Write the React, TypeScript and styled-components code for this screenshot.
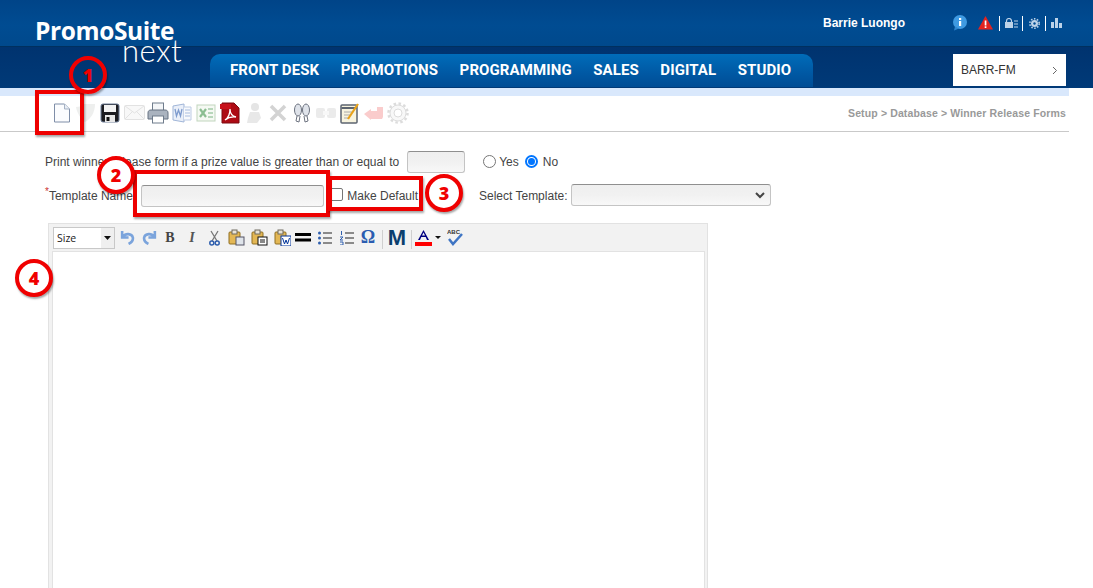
import React from "react";
import styled, { createGlobalStyle } from "styled-components";

const Global = createGlobalStyle`
  html, body { margin: 0; padding: 0; background: #fff; height: 588px; overflow: hidden; }
  body { font-family: "Liberation Sans", Arial, sans-serif; font-size: 12px; color: #444; }
`;

const Page = styled.div`
  position: relative;
  width: 1093px;
  height: 588px;
  overflow: hidden;
`;

const Header = styled.header`
  position: relative;
  height: 88px;
  display: flex;
  flex-direction: column;
`;

const TopBar = styled.div`
  height: 47px;
  box-sizing: border-box;
  background: linear-gradient(180deg, #004488 0%, #004c92 55%, #00498c 100%);
  border-bottom: 1px solid #00305f;
  display: flex;
  justify-content: flex-end;
  align-items: flex-start;
  padding: 16px 27px 0 0;
`;

const NavBar = styled.div`
  flex: 1;
  background: linear-gradient(180deg, #00336f 0%, #003a78 100%);
  display: flex;
  align-items: flex-end;
  justify-content: space-between;
  padding: 0 27px 0 210px;
`;

const Brand = styled.div`
  position: absolute;
  left: 35px;
  top: 16px;
  width: 150px;
  color: #fff;
`;

const BrandName = styled.div`
  font-family: "Open Sans", sans-serif;
  font-weight: 700;
  font-size: 24.5px;
  line-height: 30px;
  letter-spacing: -0.4px;
`;

const BrandNext = styled.div`
  font-family: "Lato", sans-serif;
  font-weight: 300;
  font-size: 31px;
  line-height: 25px;
  letter-spacing: 0.5px;
  margin-left: 87px;
  margin-top: -8px;
`;

const UserName = styled.span`
  font-weight: 700;
  font-size: 12px;
  line-height: 14px;
  color: #fff;
  margin-right: 47px;
`;

const TopIcons = styled.div`
  display: flex;
  align-items: center;
  height: 14px;
`;

const TopIcon = styled.span<{ $w: number; $ml?: number }>`
  display: flex;
  align-items: center;
  justify-content: center;
  width: ${(p) => p.$w}px;
  margin-left: ${(p) => p.$ml ?? 0}px;
  height: 14px;
`;

const TopSep = styled.span<{ $ml?: number }>`
  width: 1px;
  height: 15px;
  margin-left: ${(p) => p.$ml ?? 0}px;
  background: #fff;
`;

const NavTabs = styled.nav`
  width: 603px;
  height: 34px;
  box-sizing: border-box;
  border-radius: 10px 10px 0 0;
  background: linear-gradient(180deg, #006cb9 0%, #0058a3 60%, #004d95 100%);
  border-bottom: 1px solid #003a78;
  display: flex;
  align-items: center;
  gap: 21.5px;
  padding: 0 0 1px 20px;
`;

const NavItem = styled.span`
  font-family: "Roboto", sans-serif;
  font-weight: 700;
  font-size: 15px;
  letter-spacing: 0.1px;
  color: #fff;
  white-space: nowrap;
`;

const Station = styled.div`
  width: 113px;
  height: 32px;
  margin-bottom: 2px;
  background: #fff;
  box-sizing: border-box;
  display: flex;
  align-items: center;
  justify-content: space-between;
  padding: 0 8px;
  font-size: 12px;
  color: #333;
`;

const Strip = styled.div`
  width: 1069px;
  height: 8px;
  background: #d9e8fc;
`;

const ToolRow = styled.div`
  width: 1069px;
  height: 36px;
  box-sizing: border-box;
  border-bottom: 1px solid #c9c9c9;
  display: flex;
  align-items: center;
  justify-content: space-between;
  padding: 0 3px 2px 50px;
`;

const ToolIcons = styled.div`
  display: flex;
  align-items: center;
`;

const ToolIcon = styled.span`
  width: 24px;
  height: 24px;
  display: flex;
  align-items: center;
  justify-content: center;
`;

const Crumb = styled.div`
  font-size: 10.5px;
  font-weight: 700;
  color: #999;
  letter-spacing: 0.13px;
`;

const Form = styled.main`
  padding: 18px 0 0 45px;
`;

const Row = styled.div`
  display: flex;
  align-items: center;
  height: 24px;
`;

const SecondRow = styled(Row)`
  margin-top: 10px;
`;

const Label = styled.label`
  font-size: 12px;
  color: #444;
  white-space: nowrap;
`;

const Required = styled.sup`
  color: #c33;
  font-size: 10px;
  line-height: 0;
`;

const TextBox = styled.div<{ $w: number; $ml: number }>`
  width: ${(p) => p.$w}px;
  height: 22px;
  margin-left: ${(p) => p.$ml}px;
  box-sizing: border-box;
  border: 1px solid #c4c4c4;
  border-top-color: #8f8f8f;
  border-radius: 3px;
  background: linear-gradient(180deg, #efefef 0%, #f1f1f1 50%, #f8f8f8 100%);
  flex: none;
`;

const RadioDot = styled.span<{ $on?: boolean; $ml: number }>`
  width: 13px;
  height: 13px;
  margin-left: ${(p) => p.$ml}px;
  margin-top: -2px;
  box-sizing: border-box;
  border-radius: 50%;
  flex: none;
  background: #fff;
  border: ${(p) => (p.$on ? "2px solid #0075ff" : "1px solid #767676")};
  display: flex;
  align-items: center;
  justify-content: center;
  &::after {
    content: "";
    width: 7px;
    height: 7px;
    border-radius: 50%;
    background: ${(p) => (p.$on ? "#0075ff" : "transparent")};
  }
`;

const Check = styled.span`
  width: 13px;
  height: 13px;
  margin-left: 6px;
  margin-top: -3px;
  border: 1px solid #767676;
  border-radius: 2px;
  box-sizing: border-box;
  background: #fff;
  flex: none;
`;

const InlineText = styled.span<{ $ml: number }>`
  margin-left: ${(p) => p.$ml}px;
  white-space: nowrap;
  color: #444;
`;

const SelectBox = styled.div`
  width: 200px;
  height: 22px;
  margin-left: 4px;
  box-sizing: border-box;
  border: 1px solid #c4c4c4;
  border-top-color: #8f8f8f;
  border-radius: 3px;
  background: linear-gradient(180deg, #efefef 0%, #f1f1f1 50%, #f8f8f8 100%);
  display: flex;
  align-items: center;
  justify-content: flex-end;
  padding-right: 5px;
  margin-top: -2px;
`;

const Editor = styled.section`
  width: 660px;
  height: 420px;
  margin: 15px 0 0 3px;
  box-sizing: border-box;
  border: 1px solid #e2e2e2;
  background: #f2f2f2;
  padding: 0 2px 0 3px;
`;

const EditorBar = styled.div`
  height: 27px;
  display: flex;
  align-items: center;
  padding-left: 1px;
`;

const SizePick = styled.div`
  width: 62px;
  height: 22px;
  margin-right: 1px;
  box-sizing: border-box;
  border: 1px solid #c8c8c8;
  background: #fff;
  display: flex;
  align-items: center;
  justify-content: space-between;
  font-size: 10.5px;
  font-family: "Open Sans", sans-serif;
  color: #222;
  padding-left: 3px;
  flex: none;
`;

const SizeArrow = styled.span`
  width: 13px;
  height: 20px;
  background: #efefef;
  display: flex;
  align-items: center;
  justify-content: center;
`;

const EdIcon = styled.span<{ $w: number }>`
  width: ${(p) => p.$w}px;
  height: 22px;
  display: flex;
  align-items: center;
  justify-content: center;
  flex: none;
`;

const EdGlyph = styled(EdIcon)`
  font-family: "Liberation Serif", serif;
  font-weight: 700;
  font-size: 14px;
  color: #444;
`;

const EdItalic = styled(EdGlyph)`
  font-style: italic;
  color: #555;
`;

const EdOmega = styled(EdGlyph)`
  font-size: 18px;
  color: #2a5cb0;
`;

const EdBigM = styled(EdIcon)`
  font-family: "Liberation Sans", sans-serif;
  font-weight: 700;
  font-size: 22px;
  color: #0a3f6e;
`;

const EdSep = styled.span<{ $ml?: number }>`
  width: 1px;
  height: 19px;
  margin-left: ${(p) => p.$ml ?? 0}px;
  background: #cfcfcf;
  flex: none;
  align-self: flex-end;
  margin-bottom: 2px;
`;

const EditArea = styled.div`
  height: 400px;
  background: #fff;
  border: 1px solid #e2e2e2;
`;

const Box = styled.div<{ $l: number; $t: number; $w: number; $h: number }>`
  position: absolute;
  left: ${(p) => p.$l}px;
  top: ${(p) => p.$t}px;
  width: ${(p) => p.$w}px;
  height: ${(p) => p.$h}px;
  box-sizing: border-box;
  border: 4px solid #ee0000;
  box-shadow: 1px 2px 2px rgba(0, 0, 0, 0.35);
`;

const Marker = styled.div<{ $l: number; $t: number }>`
  position: absolute;
  left: ${(p) => p.$l}px;
  top: ${(p) => p.$t}px;
  width: 38px;
  height: 38px;
  box-sizing: border-box;
  border: 4px solid #f00000;
  border-radius: 50%;
  background: #fff;
  color: #f00000;
  font-family: "Open Sans", sans-serif;
  font-weight: 800;
  font-size: 18px;
  display: flex;
  align-items: center;
  justify-content: center;
  box-shadow: 1px 2px 2px rgba(0, 0, 0, 0.35);
`;

const RingMarker = styled(Marker)`
  background: transparent;
`;

/* ---------- icon drawings ---------- */
const Doc = () => (
  <svg width="18" height="20" viewBox="0 0 18 20">
    <path d="M1.5 1h10l5 5v13h-15z" fill="#fbfcfe" stroke="#7f8ea8" />
    <path d="M11.5 1v5h5" fill="#e8edf4" stroke="#a5b1c4" />
  </svg>
);
const Shield = () => (
  <svg width="22" height="20" viewBox="0 0 22 20" opacity=".35">
    <path d="M1 4c4 0 6-1 8-3h11c0 8-4 15-10 18C6 16 2 10 1 4z" fill="#cfd3cf" />
  </svg>
);
const Save = () => (
  <svg width="20" height="20" viewBox="0 0 20 20">
    <rect x="1" y="1" width="18" height="18" rx="2" fill="#1c1c20" stroke="#6f7e98" />
    <rect x="4" y="2" width="12" height="7" fill="#f3f3f3" />
    <rect x="5" y="12" width="10" height="7" fill="#e8e8e8" />
    <rect x="6.5" y="14" width="3" height="4" fill="#111" />
  </svg>
);
const Mail = () => (
  <svg width="21" height="15" viewBox="0 0 21 15" opacity=".55">
    <rect x=".5" y=".5" width="20" height="14" rx="1" fill="#f3f3f3" stroke="#ccc" />
    <path d="M1 1l9.5 7L20 1M1 14l7-7M20 14l-7-7" fill="none" stroke="#ccc" />
  </svg>
);
const Printer = () => (
  <svg width="22" height="22" viewBox="0 0 22 22">
    <rect x="5.5" y="1" width="11" height="8" fill="#f4f6f8" stroke="#6f7c8c" />
    <path d="M1 11c0-2 1-3 3-3h14c2 0 3 1 3 3v6H1z" fill="#aab3bf" stroke="#667282" />
    <rect x="5.5" y="14" width="11" height="7" fill="#fff" stroke="#6f7c8c" />
  </svg>
);
const Word = () => (
  <svg width="20" height="20" viewBox="0 0 20 20" opacity=".65">
    <path d="M1 3l11-2v18L1 17z" fill="#dfe8f6" stroke="#6f8fc4" />
    <path d="M12 4h7v13h-7" fill="#f3f6fb" stroke="#9bb2d8" />
    <path d="M3 6l1.5 7L6.5 7l2 6L10 6" fill="none" stroke="#3a66b4" strokeWidth="1.3" />
    <path d="M13 7h5M13 10h5M13 13h5" stroke="#7d9bd0" />
  </svg>
);
const Excel = () => (
  <svg width="20" height="20" viewBox="0 0 20 20" opacity=".55">
    <rect x="1" y="2" width="18" height="16" fill="#eef5ea" stroke="#8fb58a" />
    <path d="M4 6l6 8M10 6l-6 8" stroke="#2f8a3a" strokeWidth="2.2" />
    <path d="M12 6h5M12 10h5M12 14h5" stroke="#5aa060" strokeWidth="1.5" />
  </svg>
);
const Pdf = () => (
  <svg width="20" height="22" viewBox="0 0 20 22">
    <path d="M2 1h12l5 5v15H2z" fill="#ad0b14" stroke="#7c0b10" />
    <rect x="0" y="2" width="11" height="5" fill="#c8101a" />
    <path d="M5 18c3-2 5-6 5-11 0 4 2 7 6 8-4-.5-8 .5-11 3z" fill="none" stroke="#fff" strokeWidth="1.3" />
  </svg>
);
const Person = () => (
  <svg width="18" height="22" viewBox="0 0 18 22" opacity=".3">
    <circle cx="10" cy="5" r="4" fill="#aaa" />
    <path d="M5 10h9l2 6-4 5H2l1-5z" fill="#b5b5b5" />
  </svg>
);
const Cross = () => (
  <svg width="18" height="18" viewBox="0 0 18 18" opacity=".5">
    <path d="M2 2l14 14M16 2L2 16" stroke="#a8a8a8" strokeWidth="3.5" />
  </svg>
);
const Feet = () => (
  <svg width="18" height="20" viewBox="0 0 18 20">
    <ellipse cx="5" cy="7" rx="3.5" ry="6" fill="#dfe3ea" stroke="#6d7380" />
    <ellipse cx="13" cy="7" rx="3.5" ry="6" fill="#dfe3ea" stroke="#6d7380" />
    <path d="M4 13l-1 5 3 1 1-6M14 13l1 5-3 1-1-6" fill="none" stroke="#6d7380" />
  </svg>
);
const Link = () => (
  <svg width="20" height="12" viewBox="0 0 20 12" opacity=".4">
    <rect x="0" y="1" width="9" height="10" rx="2" fill="#cfcfcf" />
    <rect x="11" y="1" width="9" height="10" rx="2" fill="#cfcfcf" />
    <rect x="7" y="4" width="6" height="4" fill="#eee" />
  </svg>
);
const Note = () => (
  <svg width="20" height="22" viewBox="0 0 20 22">
    <rect x="1" y="3" width="16" height="18" rx="1" fill="#f7f3de" stroke="#5c6470" strokeWidth="1.5" />
    <path d="M1.5 6h15" stroke="#5c6470" strokeWidth="2" />
    <path d="M4 10h8M4 13h6M4 16h5" stroke="#aaa" />
    <path d="M8 17L18 2" stroke="#e8a21a" strokeWidth="2.2" />
  </svg>
);
const BackArrow = () => (
  <svg width="20" height="14" viewBox="0 0 20 14" opacity=".3">
    <path d="M0 8l7-5v2h6V1h6v10l-1 2H7v1z" fill="#f05a5a" />
  </svg>
);
const Cog = () => (
  <svg width="22" height="22" viewBox="0 0 22 22" opacity=".4">
    <circle cx="11" cy="11" r="8" fill="#eee" stroke="#aaa" strokeWidth="1" />
    <circle cx="11" cy="11" r="9.5" fill="none" stroke="#aaa" strokeWidth="2.5" strokeDasharray="2.5 2.5" />
    <circle cx="11" cy="11" r="4" fill="#fff" stroke="#aaa" />
  </svg>
);

const toolIcons = [Doc, Shield, Save, Mail, Printer, Word, Excel, Pdf, Person, Cross, Feet, Link, Note, BackArrow, Cog];

const Undo = ({ flip }: { flip?: boolean }) => (
  <svg width="15" height="15" viewBox="0 0 14 14">
    <g transform={flip ? "matrix(-1 0 0 1 14 0)" : undefined}>
      <path d="M2 1v6h6M3 6c2-3 8-3 9 1 .5 3-2 5-4 6" fill="none" stroke="#7ba4dc" strokeWidth="2.4" />
    </g>
  </svg>
);
const Clip = ({ children }: { children?: React.ReactNode }) => (
  <svg width="17" height="17" viewBox="0 0 17 17">
    <rect x="1" y="3" width="11" height="12" rx="1" fill="#e3b754" stroke="#8f6e22" />
    <rect x="4" y="1" width="5" height="4" fill="#e9e4d8" stroke="#6f6a5e" />
    {children}
  </svg>
);

const Top = {
  Info: () => (
    <svg width="17" height="18" viewBox="0 0 16 17">
      <circle cx="8" cy="7.5" r="7" fill="#3f9ae2" />
      <path d="M3 12l-1 4 5-2z" fill="#2f86cf" />
      <rect x="7" y="6.5" width="2.2" height="5" fill="#fff" />
      <rect x="7" y="3.5" width="2.2" height="2" fill="#fff" />
    </svg>
  ),
  Warn: () => (
    <svg width="15" height="14" viewBox="0 0 15 14">
      <path d="M7.5 0L15 13.5H0z" fill="#e3231f" />
      <rect x="6.7" y="4.5" width="1.7" height="5" fill="#fff" />
      <rect x="6.7" y="10.3" width="1.7" height="1.7" fill="#fff" />
    </svg>
  ),
  Lock: () => (
    <svg width="13" height="10" viewBox="0 0 13 10">
      <path d="M1.5 4V3a2.5 2.5 0 015 0v1" fill="none" stroke="#bcd2e8" strokeWidth="1.2" />
      <rect x="0" y="4" width="8" height="6" fill="#bcd2e8" />
      <path d="M9 3h4M9 6h4M9 9h4" stroke="#bcd2e8" />
    </svg>
  ),
  Gear: () => (
    <svg width="11" height="11" viewBox="0 0 11 11">
      <circle cx="5.5" cy="5.5" r="3.5" fill="#bcd2e8" />
      <circle cx="5.5" cy="5.5" r="4.7" fill="none" stroke="#bcd2e8" strokeWidth="1.6" strokeDasharray="1.5 1.5" />
      <circle cx="5.5" cy="5.5" r="1.2" fill="#004c92" />
    </svg>
  ),
  Bars: () => (
    <svg width="11" height="10" viewBox="0 0 11 10">
      <path d="M0 4h3v6H0zM4 0h3v10H4zM8 5h3v5H8z" fill="#bcd2e8" />
    </svg>
  ),
};

export default function App() {
  return (
    <Page>
      <Global />
      <Header>
        <TopBar>
          <UserName>Barrie Luongo</UserName>
          <TopIcons>
            <TopIcon $w={16}><Top.Info /></TopIcon>
            <TopIcon $w={15} $ml={10}><Top.Warn /></TopIcon>
            <TopSep $ml={6} />
            <TopIcon $w={22}><Top.Lock /></TopIcon>
            <TopSep />
            <TopIcon $w={22}><Top.Gear /></TopIcon>
            <TopSep />
            <TopIcon $w={20}><Top.Bars /></TopIcon>
          </TopIcons>
        </TopBar>
        <NavBar>
          <NavTabs>
            {["FRONT DESK", "PROMOTIONS", "PROGRAMMING", "SALES", "DIGITAL", "STUDIO"].map((t) => (
              <NavItem key={t}>{t}</NavItem>
            ))}
          </NavTabs>
          <Station>
            <span>BARR-FM</span>
            <svg width="6" height="9" viewBox="0 0 6 9">
              <path d="M1 1l3.5 3.5L1 8" fill="none" stroke="#666" />
            </svg>
          </Station>
        </NavBar>
        <Brand>
          <BrandName>PromoSuite</BrandName>
          <BrandNext>next</BrandNext>
        </Brand>
      </Header>
      <Strip />
      <ToolRow>
        <ToolIcons>
          {toolIcons.map((I, i) => (
            <ToolIcon key={i}><I /></ToolIcon>
          ))}
        </ToolIcons>
        <Crumb>Setup &gt; Database &gt; Winner Release Forms</Crumb>
      </ToolRow>
      <Form>
        <Row>
          <Label>Print winner release form if a prize value is greater than or equal to</Label>
          <TextBox $w={58} $ml={8} />
          <RadioDot $ml={18} />
          <InlineText $ml={3}>Yes</InlineText>
          <RadioDot $ml={6} $on />
          <InlineText $ml={5}>No</InlineText>
        </Row>
        <SecondRow>
          <Label><Required>*</Required>Template Name:</Label>
          <TextBox $w={183} $ml={5} />
          <Check />
          <InlineText $ml={4}>Make Default</InlineText>
          <InlineText $ml={61}>Select Template:</InlineText>
          <SelectBox>
            <svg width="10" height="7" viewBox="0 0 10 7">
              <path d="M1 1l4 4 4-4" fill="none" stroke="#444" strokeWidth="2" />
            </svg>
          </SelectBox>
        </SecondRow>
        <Editor>
          <EditorBar>
            <SizePick>
              Size
              <SizeArrow>
                <svg width="7" height="4" viewBox="0 0 7 4"><path d="M0 0h7L3.5 4z" fill="#111" /></svg>
              </SizeArrow>
            </SizePick>
            <EdIcon $w={22}><Undo /></EdIcon>
            <EdIcon $w={22}><Undo flip /></EdIcon>
            <EdGlyph $w={20}>B</EdGlyph>
            <EdItalic $w={24}>I</EdItalic>
            <EdIcon $w={20}>
              <svg width="11" height="16" viewBox="0 0 11 16">
                <path d="M2 1l6 10M9 1L3 11" stroke="#777" strokeWidth="1.3" />
                <circle cx="2.8" cy="13" r="2" fill="none" stroke="#2f5fae" strokeWidth="1.5" />
                <circle cx="8.2" cy="13" r="2" fill="none" stroke="#2f5fae" strokeWidth="1.5" />
              </svg>
            </EdIcon>
            <EdIcon $w={24}><Clip><rect x="8" y="8" width="8" height="8" fill="#dfe4ea" stroke="#556" /></Clip></EdIcon>
            <EdIcon $w={22}><Clip><rect x="7" y="8" width="9" height="8" fill="#fff" stroke="#111" /><path d="M9 11h5M9 13h5" stroke="#111" /></Clip></EdIcon>
            <EdIcon $w={24}><Clip><rect x="7" y="7" width="10" height="10" fill="#fff" stroke="#003399" /><path d="M8.5 9l2 6 1.5-4 1.5 4 2-6" fill="none" stroke="#003399" /></Clip></EdIcon>
            <EdIcon $w={18}>
              <svg width="16" height="9" viewBox="0 0 16 9"><path d="M0 0h16v3H0zM0 5.5h16v3H0z" fill="#000" /></svg>
            </EdIcon>
            <EdIcon $w={26}>
              <svg width="14" height="14" viewBox="0 0 14 14">
                <path d="M5 2h9M5 7h9M5 12h9" stroke="#222" />
                <circle cx="1.5" cy="2" r="1.5" fill="#2f5fae" /><circle cx="1.5" cy="7" r="1.5" fill="#2f5fae" /><circle cx="1.5" cy="12" r="1.5" fill="#2f5fae" />
              </svg>
            </EdIcon>
            <EdIcon $w={18}>
              <svg width="14" height="14" viewBox="0 0 14 14">
                <path d="M5 2h9M5 7h9M5 12h9" stroke="#222" />
                <path d="M1.5 0v4M0 6h3L0 9h3M0 11h3v3H0" fill="none" stroke="#2f5fae" />
              </svg>
            </EdIcon>
            <EdOmega $w={24}>Ω</EdOmega>
            <EdSep $ml={2} />
            <EdBigM $w={28}>M</EdBigM>
            <EdSep />
            <EdIcon $w={22}>
              <svg width="17" height="18" viewBox="0 0 17 18">
                <path d="M8.5 1L3 11h2l1.3-3h4.400L12 11h2zM7 6.5l1.5-3 1.5 3z" fill="#000080" />
                <rect x="0" y="13" width="17" height="4" fill="#f00" />
              </svg>
            </EdIcon>
            <EdIcon $w={8}>
              <svg width="6" height="3" viewBox="0 0 6 3"><path d="M0 0h6L3 3z" fill="#111" /></svg>
            </EdIcon>
            <EdIcon $w={26}>
              <svg width="17" height="17" viewBox="0 0 17 17">
                <text x="0" y="5" fontFamily="Liberation Sans" fontSize="6" fontWeight="700" fill="#333">ABC</text>
                <path d="M2 10l4 5 9-10" fill="none" stroke="#3f75c4" strokeWidth="2.5" />
              </svg>
            </EdIcon>
          </EditorBar>
          <EditArea />
        </Editor>
      </Form>

      <Box $l={35} $t={90} $w={49} $h={45} />
      <Box $l={133} $t={170} $w={197} $h={47} />
      <Box $l={328} $t={176} $w={95} $h={35} />
      <RingMarker $l={69} $t={56}>1</RingMarker>
      <Marker $l={97} $t={156}>2</Marker>
      <Marker $l={425} $t={174}>3</Marker>
      <Marker $l={15} $t={259}>4</Marker>
    </Page>
  );
}
